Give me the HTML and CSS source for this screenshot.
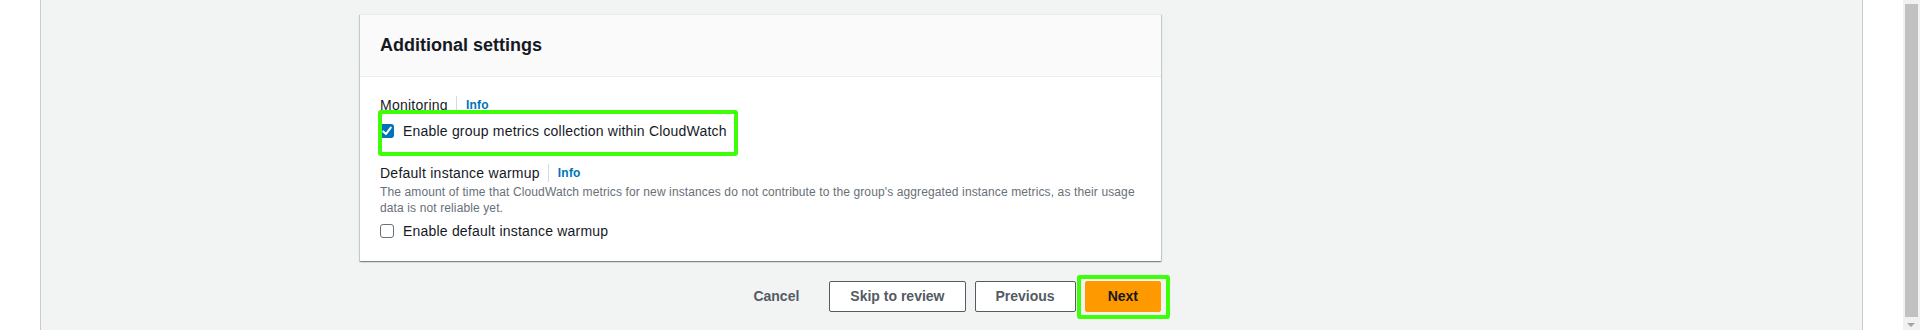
FILE: index.html
```html
<!DOCTYPE html>
<html>
<head>
  <title>Additional settings</title>
  <link rel="stylesheet" href="styles.css">
</head>
<body>
  <div class="page">
    <div class="side-left"></div>
    <div class="content">
      <div class="card">
        <div class="card-header">
          <h2>Additional settings</h2>
        </div>
        <div class="card-body">
          <div class="field">
            <div class="field-label">
              <span>Monitoring</span>
              <span class="divider"></span>
              <a class="info-link" href="#">Info</a>
            </div>
            <label class="check-row highlight">
              <span class="checkbox checked">
                <svg viewBox="0 0 14 14" width="14" height="14">
                  <polyline points="3.2,7.4 6,10 10.8,3.6" fill="none" stroke="#fff" stroke-width="2" stroke-linecap="round" stroke-linejoin="round"/>
                </svg>
              </span>
              <span>Enable group metrics collection within CloudWatch</span>
            </label>
          </div>

          <div class="field">
            <div class="field-label">
              <span>Default instance warmup</span>
              <span class="divider"></span>
              <a class="info-link" href="#">Info</a>
            </div>
            <div class="field-description">
              The amount of time that CloudWatch metrics for new instances do not contribute to the group's aggregated instance metrics, as their usage data is not reliable yet.
            </div>
            <label class="check-row">
              <span class="checkbox"></span>
              <span>Enable default instance warmup</span>
            </label>
          </div>
        </div>
      </div>

      <div class="actions">
        <button class="btn btn-link">Cancel</button>
        <button class="btn">Skip to review</button>
        <button class="btn">Previous</button>
        <button class="btn btn-primary highlight">Next</button>
      </div>
    </div>
    <div class="side-right"></div>
    <div class="scrollbar">
      <div class="scrollbar-thumb"></div>
      <div class="scrollbar-arrow"></div>
    </div>
  </div>
</body>
</html>
```

FILE: styles.css
```css
body {
  margin: 0;
  padding: 0;
  font-family: "Liberation Sans", Arial, sans-serif;
  color: #16191f;
  overflow: hidden;
}

.page {
  display: flex;
  height: 330px;
}

.side-left {
  width: 40px;
  background-color: #fff;
  border-right: 1px solid #c9cdd0;
}

.side-right {
  width: 40px;
  background-color: #fff;
  border-left: 1px solid #c9cdd0;
}

.content {
  flex: 1;
  background-color: #f2f3f3;
  padding-left: 319px;
  padding-top: 14px;
}

.card {
  width: 801px;
  background-color: #fff;
  border-top: 1px solid #eaeded;
  box-shadow: 0 1px 1px 0 rgba(0, 28, 36, 0.3), 1px 1px 1px 0 rgba(0, 28, 36, 0.15), -1px 1px 1px 0 rgba(0, 28, 36, 0.15);
}

.card-header {
  background-color: #fafafa;
  border-bottom: 1px solid #eaeded;
  padding: 19px 20px 20px;
}

.card-header h2 {
  margin: 0;
  font-size: 18px;
  line-height: 22px;
  font-weight: bold;
}

.card-body {
  padding: 17px 20px 19px;
}

.field + .field {
  margin-top: 20px;
}

.field-label {
  display: flex;
  align-items: center;
  font-size: 14px;
  line-height: 22px;
  letter-spacing: 0.25px;
}

.divider {
  width: 1px;
  height: 18px;
  background-color: #d5dbdb;
  margin: 0 9px 0 8px;
}

.info-link {
  font-size: 12px;
  font-weight: bold;
  color: #0073bb;
  text-decoration: none;
  letter-spacing: 0.2px;
}

.field-description {
  font-size: 12px;
  line-height: 16px;
  color: #687078;
  letter-spacing: 0.12px;
}

.check-row {
  display: flex;
  align-items: center;
  gap: 9px;
  margin-top: 4px;
  font-size: 14px;
  line-height: 22px;
  letter-spacing: 0.2px;
}

.checkbox {
  width: 14px;
  height: 14px;
  box-sizing: border-box;
  border: 1.5px solid #687078;
  border-radius: 3px;
  display: flex;
}

.checkbox.checked {
  border: none;
  background-color: #0073bb;
}

.actions {
  width: 801px;
  display: flex;
  justify-content: flex-end;
  gap: 9px;
  margin-top: 20px;
}

.btn {
  font-family: inherit;
  font-size: 14px;
  font-weight: bold;
  line-height: 21px;
  padding: 4px 20px;
  border: 1px solid #545b64;
  border-radius: 2px;
  background-color: #fff;
  color: #545b64;
}

.btn-link {
  border-color: transparent;
  background-color: transparent;
}

.btn-primary {
  background-color: #ff9900;
  border-color: #ff9900;
  color: #16191f;
  padding: 4px 22px;
}

/* green annotation boxes over the screenshot */
.highlight {
  position: relative;
}

.check-row.highlight::after {
  content: "";
  position: absolute;
  top: -10px;
  left: -2px;
  width: 360px;
  height: 46px;
  box-sizing: border-box;
  border: 4px solid #3dff0a;
  border-radius: 3px;
}

.btn-primary.highlight::after {
  content: "";
  position: absolute;
  top: -7px;
  left: -9px;
  right: -10px;
  bottom: -8px;
  border: 4px solid #3dff0a;
  border-radius: 3px;
}

.scrollbar {
  width: 17px;
  background-color: #f1f1f1;
  position: relative;
}

.scrollbar-thumb {
  margin: 4px 2px 0;
  height: 313px;
  background-color: #c1c1c1;
}

.scrollbar-arrow {
  position: absolute;
  left: 4px;
  bottom: 3px;
  width: 0;
  height: 0;
  border-left: 4px solid transparent;
  border-right: 4px solid transparent;
  border-top: 4px solid #a3a3a3;
}
```
